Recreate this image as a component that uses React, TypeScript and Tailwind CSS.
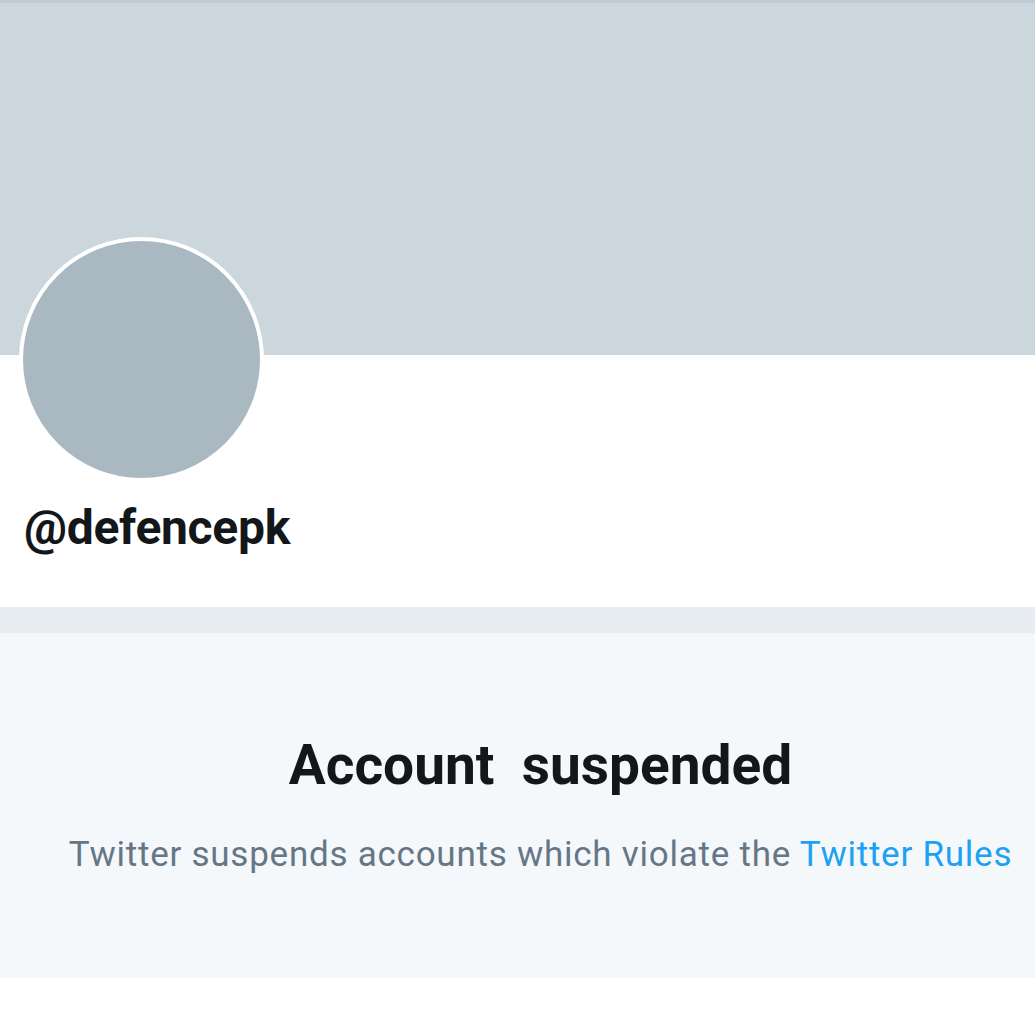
export default function App() {
  return (
    <div className="w-[1035px] h-[1017px] bg-white overflow-hidden" style={{ fontFamily: "Roboto, 'Liberation Sans', sans-serif" }}>
      <div className="h-[355px] bg-[#ccd6dd] border-t-[3px] border-[#c3cad6]" />
      <div className="h-[252px] bg-white px-[19px] flex flex-col items-start">
        <div className="-mt-[118px] w-[245px] h-[245px] rounded-full bg-[#aab8c2] border-[4px] border-white" />
        <div className="mt-[18px] ml-[5px] text-[48px] leading-[56px] font-bold text-[#14171a] tracking-[-0.3px]">@defencepk</div>
      </div>
      <div className="h-[26px] bg-[#e6ecf0]" />
      <div className="h-[345px] bg-[#f5f8fa] flex flex-col items-center pt-[100px] pl-[46px]">
        <div className="text-[55px] leading-[64px] font-bold text-[#14171a] whitespace-pre">Account  suspended</div>
        <div className="mt-[36px] text-[35px] leading-[44px] text-[#657786] tracking-[0.75px] whitespace-nowrap">
          Twitter suspends accounts which violate the <span className="text-[#1da1f2]">Twitter Rules</span>
        </div>
      </div>
    </div>
  );
}
